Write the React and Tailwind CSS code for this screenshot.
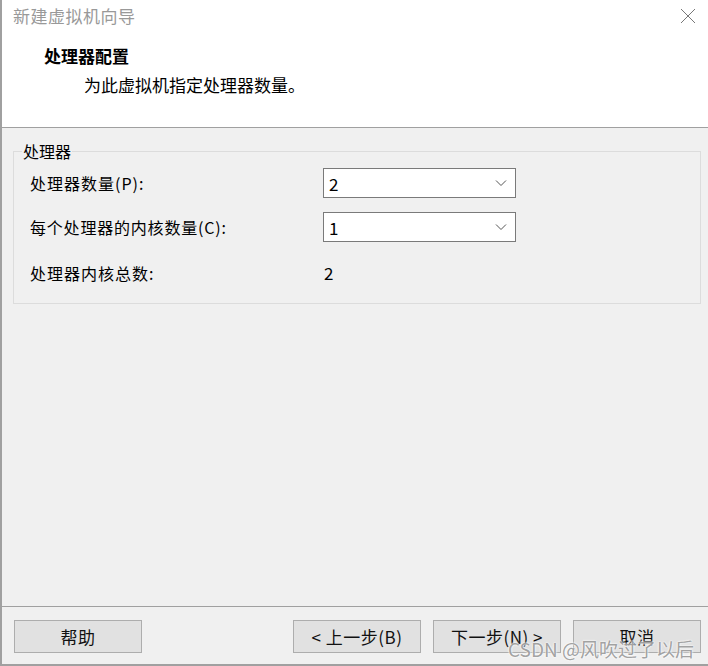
const CJK = { fontFamily: '"Noto Sans CJK SC", "Noto Sans", sans-serif' };
const SERIF = { fontFamily: '"Liberation Serif", "Noto Sans CJK SC", serif' };

const Chevron = () => (
  <svg width="12" height="8" viewBox="0 0 12 8" className="shrink-0">
    <path d="M1 1.5 L6 6.5 L11 1.5" fill="none" stroke="#555" strokeWidth="1" />
  </svg>
);

const Select = ({ value }) => (
  <div className="w-[193px] h-[30px] bg-white border border-[#7a7a7a] flex items-center justify-between pl-[5px] pr-[8px]">
    <span className="text-[17px] text-black leading-none">{value}</span>
    <Chevron />
  </div>
);

const Button = ({ children, className = '' }) => (
  <button
    className={`w-[128px] h-[33px] bg-[#e1e1e1] border border-[#adadad] text-[17px] text-[#111] tracking-[0.5px] flex items-center justify-center ${className}`}
  >
    {children}
  </button>
);

export default function App() {
  return (
    <div
      className="relative w-[708px] h-[666px] bg-[#f0f0f0] border-l-2 border-b-2 border-[#a0a0a0] flex flex-col overflow-hidden"
      style={CJK}
    >
      {/* Header */}
      <div className="bg-white h-[128px] border-b border-[#a0a0a0] shrink-0">
        <div className="h-[32px] flex items-center justify-between pl-[11px] pr-[12px]">
          <span className="text-[17px] text-[#999] tracking-[0.5px]">新建虚拟机向导</span>
          <svg width="16" height="16" viewBox="0 0 16 16">
            <path d="M1 1 L15 15 M15 1 L1 15" stroke="#777" strokeWidth="1" />
          </svg>
        </div>
        <div className="pl-[42px] pt-[14px]">
          <div className="text-[17px] font-bold text-black leading-[24px]" style={SERIF}>
            处理器配置
          </div>
          <div className="pl-[40px] pt-[5px] text-[17px] text-black leading-[24px]" style={SERIF}>
            为此虚拟机指定处理器数量。
          </div>
        </div>
      </div>

      {/* Body */}
      <div className="flex-1 pl-[11px] pr-[7px] pt-[23px]">
        <div className="relative border border-[#dcdcdc] h-[153px] pl-[16px] pr-[12px] pt-[16px]">
          <span className="absolute left-[8px] top-[-11px] bg-[#f0f0f0] px-[1px] text-[16px] text-black leading-[20px]">
            处理器
          </span>
          <div className="flex items-center h-[30px]">
            <span className="w-[293px] text-[16px] text-black tracking-[1px]">处理器数量(P):</span>
            <Select value="2" />
          </div>
          <div className="flex items-center h-[30px] mt-[14px]">
            <span className="w-[293px] text-[16px] text-black tracking-[0.8px]">每个处理器的内核数量(C):</span>
            <Select value="1" />
          </div>
          <div className="flex items-center h-[30px] mt-[16px]">
            <span className="w-[293px] text-[16px] text-black tracking-[1px]">处理器内核总数:</span>
            <span className="text-[17px] text-black pl-[1px]">2</span>
          </div>
        </div>
      </div>

      {/* Footer */}
      <div className="h-[58px] border-t border-[#a0a0a0] shrink-0 flex items-start pt-[13px] pl-[12px]">
        <Button>帮助</Button>
        <div className="flex-1" />
        <div className="flex gap-[12px] pr-[7px]">
          <Button>&lt; 上一步(B)</Button>
          <Button>下一步(N) &gt;</Button>
          <Button>取消</Button>
        </div>
      </div>

      {/* Watermark */}
      <span
        className="absolute right-[14px] bottom-[6px] text-[19px] text-[#8a8a8a]/80 leading-none pointer-events-none"
        style={{ textShadow: '0 0 2px #fff, 0 0 2px #fff' }}
      >
        CSDN @风吹过了以后
      </span>
    </div>
  );
}
